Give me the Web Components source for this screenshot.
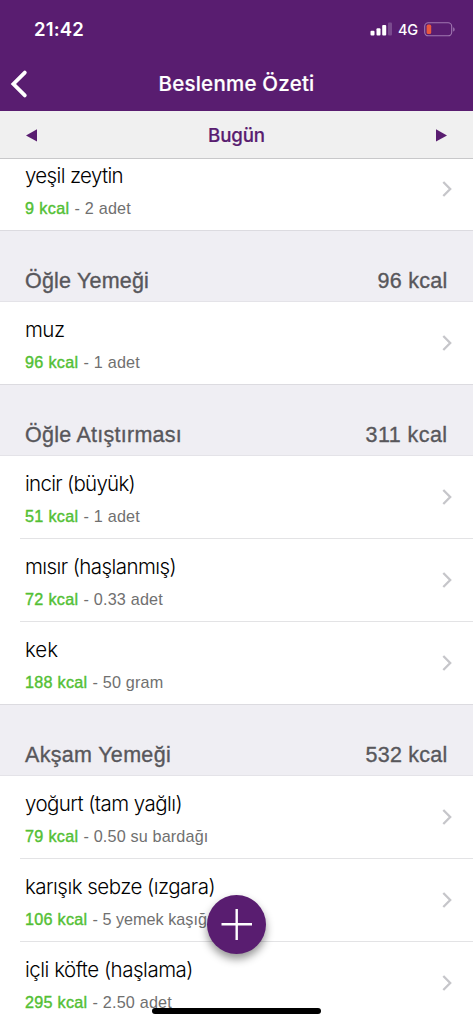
<!DOCTYPE html>
<html lang="tr">
<head>
<meta charset="utf-8">
<title>Beslenme Özeti</title>
<style>
html,body{margin:0;height:100%;overflow:hidden;background:#fff}
body{font-family:"Liberation Sans",Arial,sans-serif}
</style>
</head>
<body>
<nutrition-app>
  <status-bar slot="top"></status-bar>
  <nav-bar slot="top"><fit-text w="156">Beslenme Özeti</fit-text></nav-bar>
  <day-bar slot="top"><fit-text w="57">Bugün</fit-text></day-bar>
  <food-row name="yeşil zeytin" nw="98" kcal="9 kcal" kw="44.5" amount="- 2 adet" aw="56.5" last></food-row>
  <meal-head name="Öğle Yemeği" nw="124" total="96 kcal" tw="70"></meal-head>
  <food-row name="muz" nw="39.5" kcal="96 kcal" kw="53.5" amount="- 1 adet" aw="56.5" last></food-row>
  <meal-head name="Öğle Atıştırması" nw="157" total="311 kcal" tw="82"></meal-head>
  <food-row name="incir (büyük)" nw="110" kcal="51 kcal" kw="53.5" amount="- 1 adet" aw="56.5"></food-row>
  <food-row name="mısır (haşlanmış)" nw="151" kcal="72 kcal" kw="53.5" amount="- 0.33 adet" aw="79.5"></food-row>
  <food-row name="kek" nw="33" kcal="188 kcal" kw="62.5" amount="- 50 gram" aw="71" last></food-row>
  <meal-head name="Akşam Yemeği" nw="146" total="532 kcal" tw="82"></meal-head>
  <food-row name="yoğurt (tam yağlı)" nw="157" kcal="79 kcal" kw="53.5" amount="- 0.50 su bardağı" aw="125"></food-row>
  <food-row name="karışık sebze (ızgara)" nw="190" kcal="106 kcal" kw="62.5" amount="- 5 yemek kaşığı" aw="119"></food-row>
  <food-row name="içli köfte (haşlama)" nw="168" kcal="295 kcal" kw="62.5" amount="- 2.50 adet" aw="79.5"></food-row>
  <add-button slot="over"></add-button>
  <home-bar slot="over"></home-bar>
</nutrition-app>
<script>
const define = (name, html, setup) => customElements.define(name, class extends HTMLElement {
  connectedCallback() {
    if (this.shadowRoot) return;
    const root = this.attachShadow({mode: 'open'});
    const t = document.createElement('template');
    t.innerHTML = typeof html === 'function' ? html(this) : html;
    root.append(t.content.cloneNode(true));
    if (setup) setup(this, root);
  }
});

define('nutrition-app', `<style>
:host{display:flex;flex-direction:column;height:1024px;width:473px;position:relative;overflow:hidden;background:#fff}
.top{flex:none}
.list{flex:1;min-height:0;overflow:hidden}
.inner{margin-top:-11px}
</style><div class="top"><slot name="top"></slot></div><div class="list"><div class="inner"><slot></slot></div></div><slot name="over"></slot>`);

define('status-bar', `<style>
:host{display:flex;align-items:center;height:58px;box-sizing:border-box;padding:0 18px 0 34px;background:#591d70;color:#fff;font-family:Inter,sans-serif}
.time{font-size:18.5px;font-weight:600;flex:1}
.net{font-size:14.5px;font-weight:500;margin:1px 6px 0 6px}
svg{display:block}
</style>
<span class="time"><fit-text w="50">21:42</fit-text></span>
<svg width="22" height="14" viewBox="0 0 22 14"><g fill="#fff"><rect x="0.5" y="8.8" width="4" height="4.7" rx="1"/><rect x="6.5" y="6.2" width="4" height="7.3" rx="1"/><rect x="12.2" y="3" width="4" height="10.5" rx="1"/></g><rect x="18" y="0.5" width="4" height="13" rx="1" fill="#7a4a8e"/></svg>
<span class="net"><fit-text w="20">4G</fit-text></span>
<svg width="31" height="15" viewBox="0 0 31 15"><rect x="0.7" y="0.8" width="27" height="13" rx="3.6" fill="none" stroke="#a077b0" stroke-width="1.1"/><rect x="2.6" y="2.6" width="4.6" height="9.4" rx="1.6" fill="#e9583f"/><path d="M29.2 5.2q1.4.5 1.4 2.2t-1.4 2.2z" fill="#a077b0"/></svg>`);

define('nav-bar', `<style>
:host{display:grid;grid-template-columns:60px 1fr 60px;align-items:center;height:53px;background:#591d70;color:#fff;font:500 20.5px Inter,sans-serif;-webkit-text-stroke:.2px #fff}
svg{display:block;margin:-2px 0 0 10px}
.t{text-align:center;margin-top:-2px}
</style><svg width="18" height="30" viewBox="0 0 18 30"><path d="M14.8 3.6L3.4 15l11.4 11.4" fill="none" stroke="#fff" stroke-width="3.8" stroke-linecap="round" stroke-linejoin="miter"/></svg><div class="t"><slot></slot></div>`);

define('day-bar', `<style>
:host{display:flex;align-items:center;justify-content:space-between;height:48px;box-sizing:border-box;padding:1px 26px 0 26px;background:#f0f0f0;border-bottom:1px solid #c8c8ca;color:#591d70;font:500 18.7px Inter,sans-serif;-webkit-text-stroke:.2px #591d70}
svg{display:block}
</style><svg width="11" height="13" viewBox="0 0 11 13"><path d="M11 .3v12.2L0 6.4z" fill="#591d70"/></svg><slot></slot><svg width="11" height="13" viewBox="0 0 11 13"><path d="M0 .3v12.2l11-6.1z" fill="#591d70"/></svg>`);

define('meal-head', e => `<style>
:host{display:flex;justify-content:space-between;height:72px;box-sizing:border-box;padding:38px 25.5px 0 25px;background:#efeef3;border-top:1px solid #dcdbe0;border-bottom:1px solid #e4e3e8;color:#58575b;font-size:21.5px;line-height:24px;-webkit-text-stroke:.35px #58575b}
</style><fit-text w="${e.getAttribute('nw')}">${e.getAttribute('name')}</fit-text><fit-text w="${e.getAttribute('tw')}">${e.getAttribute('total')}</fit-text>`);

define('food-row', e => `<style>
:host{display:flex;align-items:center;height:83px;box-sizing:border-box;background:#fff;position:relative}
:host([last]){height:82px}
:host(:not([last])){background:linear-gradient(#e3e3e5,#e3e3e5) 20px 100%/100% 1px no-repeat #fff}
.text{flex:1;height:82px;padding-left:25px;box-sizing:border-box;align-self:flex-start}
.name{height:26px;line-height:26px;padding-top:15px;font-family:Inter,sans-serif;font-weight:300;font-size:20.5px;color:#000}
.sub{display:flex;gap:5px;margin-top:9px;line-height:20px;font-size:16.2px;color:#707070}
.k{color:#53c034;-webkit-text-stroke:.4px #53c034}
svg{display:block;margin:-1px 18px 0 0}
</style><div class="text"><div class="name"><fit-text w="${e.getAttribute('nw')}">${e.getAttribute('name')}</fit-text></div>
<div class="sub"><fit-text class="k" w="${e.getAttribute('kw')}">${e.getAttribute('kcal')}</fit-text><fit-text w="${e.getAttribute('aw')}">${e.getAttribute('amount')}</fit-text></div></div>
<svg width="14" height="18" viewBox="0 0 14 18"><path d="M2.3 2L9.2 9l-6.9 7" fill="none" stroke="#c6c6ca" stroke-width="2.3"/></svg>`);

define('add-button', `<style>
:host{display:block;position:absolute;left:207px;top:895px;width:59px;height:59px;border-radius:50%;background:#591d70;box-shadow:0 5px 9px rgba(0,0,0,.42)}
svg{display:block}
</style><svg width="59" height="59" viewBox="0 0 59 59"><path d="M14.5 29.3h30.5M29.7 14v31" stroke="#fff" stroke-width="2.4"/></svg>`);

define('home-bar', `<style>:host{display:block;position:absolute;left:152px;top:1007.5px;width:169px;height:6.5px;border-radius:4px;background:#000}</style>`);

/* Single-line label whose tracking is adjusted to a given advance width.
   Defined last, so that the fonts of its hosts already apply when it measures. */
define('fit-text', '<style>:host{display:inline-block;white-space:pre;flex:none}</style><span><slot></slot></span>', (el, root) => {
  const n = [...el.textContent].length, w = +el.getAttribute('w');
  const s = root.querySelector('span');
  s.style.letterSpacing = ((w - s.getBoundingClientRect().width) / n).toFixed(3) + 'px';
});
</script>
</body>
</html>
